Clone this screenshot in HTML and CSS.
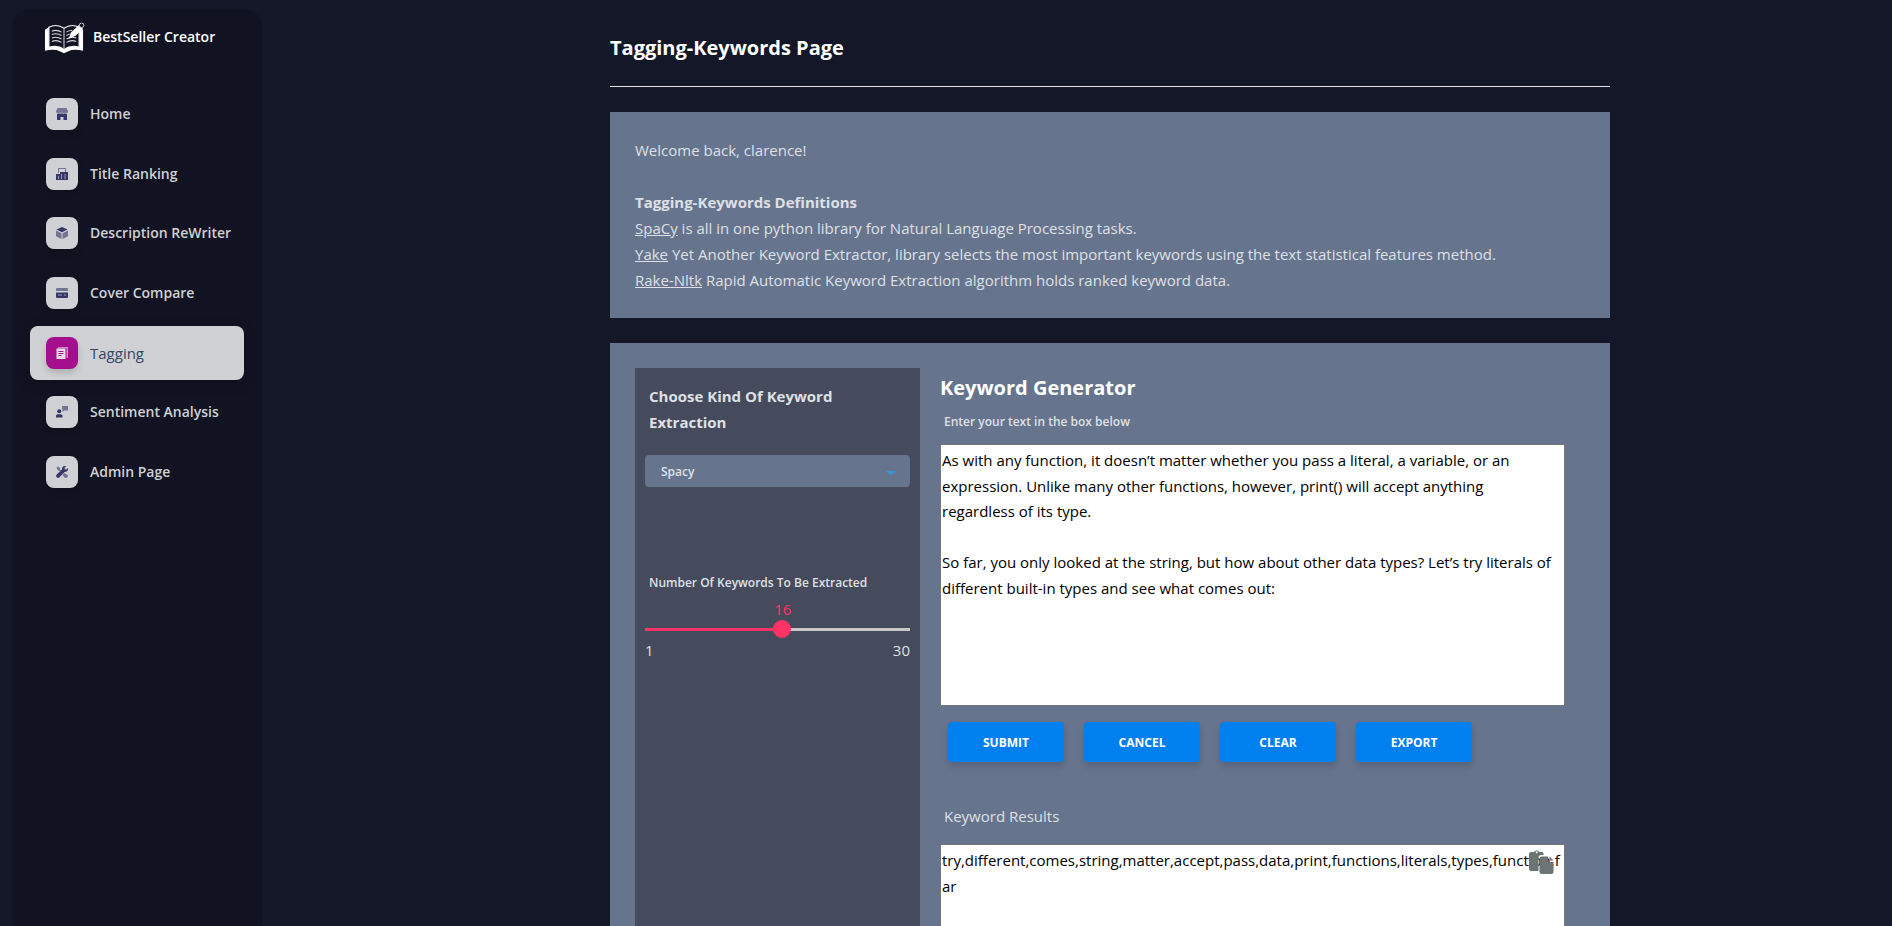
FILE: index.html
```html
<!DOCTYPE html>
<html lang="en">
<head>
<meta charset="utf-8">
<title>BestSeller Creator - Tagging</title>
<link rel="stylesheet" href="styles.css">
</head>
<body>
<div class="app">
  <aside class="sidebar">
    <a class="brand" href="#">
      <svg class="brand-logo" viewBox="0 0 42 32" aria-hidden="true">
        <path d="M1 7.500L5 5v20.500Q14 23 20.500 27.500Q28 23 36 25.500V5L40 7.500V29Q30 27 25 29.500L20.500 31.500L16 29.500Q11 27 1 29Z" fill="#fff"/>
        <path d="M5 5Q13 1 20.500 6Q28 1 36 5V25.500Q28 23 20.500 27.500Q14 23 5 25.500Z" fill="#111322" stroke="#fff" stroke-width="1.200"/>
        <path d="M20.500 6V27" stroke="#9a9ba5" stroke-width="1.500"/>
        <path d="M8 9q5-2 10 1M8 12.500q5-2 10 1M8 16q5-2 10 1M8 19.500q5-2 10 1M23 10q3-2 6-1.500M23 13.500q3-2 5-1.500M23 17q5-3 10-1M23 20.500q5-3 10-1" fill="none" stroke="#d4d5da" stroke-width="1.100"/>
        <path d="M25 17l3-7L36 2.500l4 4L32 14z" fill="#fff"/>
        <circle cx="38.500" cy="3" r="2.300" fill="#111322" stroke="#c8c9d0"/>
      </svg>
      <span>BestSeller Creator</span>
    </a>
    <nav>
      <ul class="nav">
        <li><a class="nav-link" href="#"><span class="nav-icon"><svg viewBox="0 0 12 12"><path class="soft" d="M1.500 0h9L12 3.500C12 5.500 9.500 5.500 9 4.500 8.500 5.500 6.500 5.500 6 4.500 5.500 5.500 3.500 5.500 3 4.500 2.500 5.500 0 5.500 0 3.500z"/><path d="M1 6q1.500 0 2-.8 1.500 1.300 3 0 1.500 1.300 3 0 .5.800 2 .8v6H7.500V9h-3v3H1z"/></svg></span>Home</a></li>
        <li><a class="nav-link" href="#"><span class="nav-icon"><svg viewBox="0 0 12 12"><path class="soft" d="M2 0h8v4H9V1H3v4H2z"/><path d="M0 6h4V4h8v8H0z"/><path class="gap" d="M2 8h1v3H2zM5 6h1v5H5zM8.500 6h1v5h-1z"/></svg></span>Title Ranking</a></li>
        <li><a class="nav-link" href="#"><span class="nav-icon"><svg viewBox="0 0 12 12"><path d="M6 0l5.500 2.500L6 5.300.5 2.500z"/><path class="soft" d="M0 3.500l5.500 2.700V12L0 9.300zM12 3.500L6.500 6.200V12L12 9.300z"/></svg></span>Description ReWriter</a></li>
        <li><a class="nav-link" href="#"><span class="nav-icon"><svg viewBox="0 0 12 12"><path class="soft" d="M0 2q0-1 1-1h10q1 0 1 1v2H0z"/><path d="M0 5.500h12V10q0 1-1 1H1q-1 0-1-1z"/><path class="gap" d="M2 7.500h4v1H2zM8 7.500h2v1H8z"/></svg></span>Cover Compare</a></li>
        <li><a class="nav-link active" href="#" aria-current="page"><span class="nav-icon"><svg viewBox="0 0 12 12"><path class="soft" d="M2 0h10v11h-1.500V1.300H2z"/><path d="M.5 1.500h9V12h-9z"/><path class="mark" d="M2.500 4h5v1h-5zM2.500 6h5v1h-5zM2.500 8h3v1h-3z"/></svg></span>Tagging</a></li>
        <li><a class="nav-link" href="#"><span class="nav-icon"><svg viewBox="0 0 12 12"><path class="soft" d="M6 0h6v4.500H8L6.500 6z"/><circle cx="3.200" cy="5.300" r="2"/><path d="M0 11.500V10q0-1.800 2-1.800h2.500q2 0 2 1.800v1.500z"/></svg></span>Sentiment Analysis</a></li>
        <li><a class="nav-link" href="#"><span class="nav-icon"><svg viewBox="0 0 12 12"><path class="soft" d="M.5 1.500L2 .5l2 1.500v1.500l2 2L5 6.500l-2-2H2zM8 7l3 1.500q2 1.500 0 3-1.500 1-3-.5L6.500 9z"/><path d="M10.300 0L8.500 1.800l.3 1.500 1.500.3L12 2q.5 4-3.500 4L3.500 11.300Q2 12.500.7 11.300-.5 10 .7 8.500L6 3.500Q6-.5 10.300 0z"/></svg></span>Admin Page</a></li>
      </ul>
    </nav>
  </aside>

  <main class="main">
    <div class="content">
      <h1 class="page-title">Tagging-Keywords Page</h1>

      <section class="panel">
        <p>Welcome back, clarence!</p>
        <h2 class="definitions-title">Tagging-Keywords Definitions</h2>
        <p><a href="#">SpaCy</a> is all in one python library for Natural Language Processing tasks.</p>
        <p><a href="#">Yake</a> Yet Another Keyword Extractor, library selects the most important keywords using the text statistical features method.</p>
        <p><a href="#">Rake-Nltk</a> Rapid Automatic Keyword Extraction algorithm holds ranked keyword data.</p>
      </section>

      <form class="panel generator" onsubmit="return false">
        <div class="options">
          <label class="kind-label" for="kind">Choose Kind Of Keyword Extraction</label>
          <div class="select-wrap">
            <select id="kind" class="kind-select">
              <option>Spacy</option>
              <option>Yake</option>
              <option>Rake-Nltk</option>
            </select>
          </div>
          <label class="count-label" for="count">Number Of Keywords To Be Extracted</label>
          <div class="slider">
            <output class="slider-value" for="count" style="left: 52%">16</output>
            <input id="count" class="range" type="range" min="1" max="30" value="16">
            <div class="slider-ends"><span>1</span><span>30</span></div>
          </div>
        </div>

        <div class="workspace">
          <h2 class="workspace-title">Keyword Generator</h2>
          <label class="hint" for="source">Enter your text in the box below</label>
          <textarea id="source" class="box source" spellcheck="false">As with any function, it doesn’t matter whether you pass a literal, a variable, or an expression. Unlike many other functions, however, print() will accept anything regardless of its type.

So far, you only looked at the string, but how about other data types? Let’s try literals of different built-in types and see what comes out:</textarea>
          <div class="actions">
            <button class="btn" type="submit">SUBMIT</button>
            <button class="btn" type="button">CANCEL</button>
            <button class="btn" type="button">CLEAR</button>
            <button class="btn" type="button">EXPORT</button>
          </div>
          <label class="results-label" for="results">Keyword Results</label>
          <div class="results">
            <textarea id="results" class="box" spellcheck="false">try,different,comes,string,matter,accept,pass,data,print,functions,literals,types,function,far</textarea>
            <button class="copy" type="button" aria-label="Copy results">
              <svg viewBox="0 0 25 24"><path fill-rule="evenodd" d="M2 2h3Q7.500-1.500 10.500 2H13q1.500 0 1.500 1.500V5h-2Q9.500 5 9.500 8v13H2q-2 0-2-2V4Q0 2 2 2zM7.700 1.300a1 1 0 1 0 .1 0z"/><path d="M12.500 6.500H19v5.500h5.500v10q0 2-2 2h-10q-2 0-2-2V8.500q0-2 2-2zM20.500 6.500l4 4h-4z"/></svg>
            </button>
          </div>
        </div>
      </form>
    </div>
  </main>
</div>
</body>
</html>
```
FILE: styles.css
```css
* { box-sizing: border-box; }

body {
  margin: 0;
  background: #141727;
  color: #dee0e4;
  font-family: "Open Sans", "Noto Sans", sans-serif;
  font-size: 15px;
  line-height: 26px;
}

h1, h2, p { margin: 0; }

a { color: inherit; }

.app {
  display: grid;
  grid-template-columns: 250px 1fr;
  height: 100vh;
  padding-left: 12px;
  overflow: hidden;
}

.sidebar {
  margin-top: 10px;
  padding: 0 18px;
  border-radius: 16px 16px 0 0;
  background: #111322;
}

.brand {
  display: flex;
  align-items: center;
  gap: 8px;
  height: 56px;
  padding-left: 14px;
  color: #fff;
  font-size: 14px;
  font-weight: 600;
  line-height: 20px;
  text-decoration: none;
}

.brand-logo { width: 41px; height: 32px; }

.brand span { padding-bottom: 3px; }

.nav {
  display: flex;
  flex-direction: column;
  justify-content: space-between;
  height: 412px;
  margin: 21px 0 0;
  padding: 0;
  list-style: none;
}

.nav-link {
  display: flex;
  align-items: center;
  gap: 12px;
  height: 54px;
  padding: 0 16px;
  border-radius: 8px;
  color: #cfd0d3;
  font-size: 14px;
  font-weight: 600;
  text-decoration: none;
  white-space: nowrap;
}

.nav-link.active {
  background: #d0d1d5;
  color: #344767;
  font-size: 15px;
  font-weight: 400;
  box-shadow: 0 4px 14px rgba(0, 0, 0, 0.2);
}

.nav-icon {
  display: grid;
  place-items: center;
  flex: none;
  width: 32px;
  height: 32px;
  border-radius: 8px;
  background: #d0d1d5;
  box-shadow: 0 4px 6px rgba(0, 0, 0, 0.15);
}

.nav-icon svg {
  width: 12px;
  height: 12px;
  fill: #343767;
}

.nav-icon .soft { opacity: 0.6; }
.nav-icon .gap { fill: #9a9cb2; }

.active .nav-icon { background: #a50e8d; }
.active .nav-icon svg { fill: #f0dcee; }
.active .mark { fill: #a50e8d; }

.main {
  padding: 0 56px 0 122px;
  overflow-y: auto;
  scrollbar-width: none;
}

.content {
  max-width: 1000px;
  margin: 0 auto;
}

.page-title {
  height: 87px;
  padding-top: 35px;
  margin-bottom: 25px;
  border-bottom: 1px solid #e4e4e6;
  color: #fff;
  font-size: 20px;
  font-weight: 700;
}

.panel {
  margin-bottom: 25px;
  padding: 25px;
  background: #67748e;
}

.definitions-title {
  margin-top: 26px;
  font-size: 15px;
  font-weight: 700;
}

.generator {
  display: grid;
  grid-template-columns: 3fr 7fr;
  align-items: stretch;
}

.options {
  padding: 15px 10px;
  background: #454a5c;
}

.kind-label, .count-label {
  display: block;
  padding: 0 4px;
  font-weight: 700;
}

.count-label {
  margin-top: 83px;
  font-size: 12px;
  font-weight: 600;
}

.select-wrap {
  position: relative;
  margin-top: 20px;
}

.select-wrap::after {
  content: "";
  position: absolute;
  top: 16px;
  right: 14px;
  border: 5px solid transparent;
  border-top: 4px solid #3498db;
  border-bottom: 0;
  pointer-events: none;
}

.kind-select {
  display: block;
  width: 100%;
  height: 32px;
  padding: 0 16px;
  border: 0;
  border-radius: 4px;
  background: #67748e;
  color: #dee0e4;
  font: 600 12px "Open Sans", "Noto Sans", sans-serif;
  appearance: none;
}

.slider {
  position: relative;
  margin-top: 24px;
}

.slider-value {
  position: absolute;
  top: -24px;
  transform: translateX(-50%);
  color: #ff3366;
}

.range {
  display: block;
  width: 100%;
  height: 18px;
  margin: 0;
  background: linear-gradient(to right, #ff3366 52%, #c8c8c8 52%) center / 100% 3px no-repeat;
  appearance: none;
}

.range::-webkit-slider-thumb {
  width: 18px;
  height: 18px;
  border-radius: 50%;
  background: #ff3366;
  appearance: none;
}

.slider-ends {
  display: flex;
  justify-content: space-between;
  line-height: 24px;
}

.workspace { padding: 7px 20px 0; }

.workspace-title {
  color: #fff;
  font-size: 20px;
  font-weight: 700;
}

.hint {
  display: block;
  margin: 8px 0 9px;
  padding-left: 4px;
  font-size: 12px;
  font-weight: 600;
}

.box {
  display: block;
  width: 100%;
  height: 262px;
  padding: 3px 1px;
  border: 1px solid #76767a;
  background: #fff;
  color: #000;
  font-family: inherit;
  font-size: 15px;
  line-height: 1.7;
  resize: none;
}

.source { padding-right: 10px; }

.actions {
  display: flex;
  gap: 20px;
  padding: 16px 8px 0;
}

.btn {
  width: 116px;
  height: 40px;
  border: 0;
  border-radius: 4px;
  background: #007fee;
  color: #fff;
  font: 700 12px "Open Sans", "Noto Sans", sans-serif;
  box-shadow: 0 4px 7px rgba(0, 0, 0, 0.15);
}

.results-label {
  display: block;
  margin: 41px 0 15px;
  padding-left: 4px;
}

.results { position: relative; }

.copy {
  position: absolute;
  top: 6px;
  right: 11px;
  width: 25px;
  height: 24px;
  padding: 0;
  border: 0;
  background: none;
}

.copy svg {
  display: block;
  fill: #6b7573;
}
```
